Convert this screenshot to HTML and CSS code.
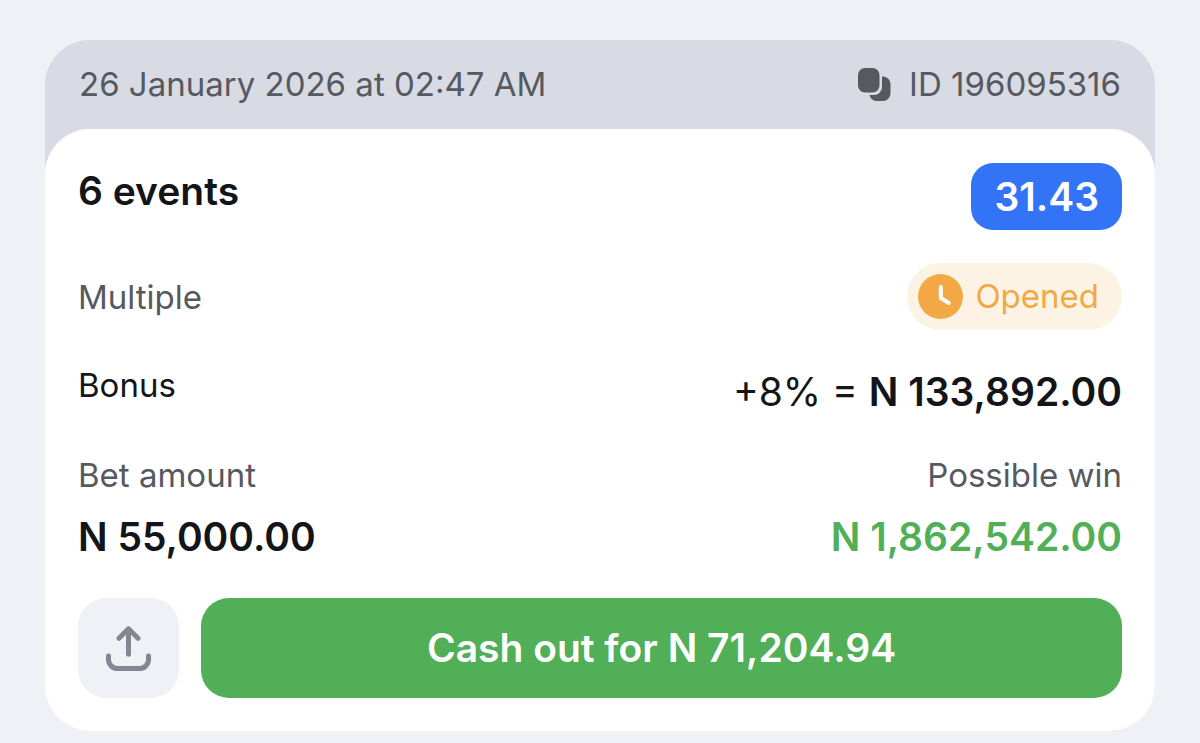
FILE: index.html
```html
<!DOCTYPE html>
<html lang="en">
<head>
    <meta charset="UTF-8">
    <meta name="viewport" content="width=device-width, initial-scale=1.0">
    <title>Bet details</title>
    <link rel="stylesheet" href="styles.css">
</head>
<body>
    <main class="bet">
        <header class="bet-header">
            <span class="date">26 January 2026 at 02:47 AM</span>
            <button class="copy-id" type="button">
                <svg class="copy-icon" viewBox="0 0 33 33" aria-hidden="true">
                    <rect width="21.5" height="24.5" rx="7"/>
                    <path d="M24 8.5h1a7.5 7.5 0 0 1 7.5 7.5v9.500a7.5 7.5 0 0 1-7.5 7.5h-6.5a7 7 0 0 1-7-6H16a8 8 0 0 0 8-8z"/>
                </svg>
                ID 196095316
            </button>
        </header>

        <section class="bet-card">
            <div class="row row-events">
                <h1 class="events">6 events</h1>
                <span class="odds">31.43</span>
            </div>

            <div class="row row-type">
                <span class="muted">Multiple</span>
                <span class="status">
                    <svg class="status-icon" viewBox="0 0 45 45" aria-hidden="true">
                        <circle cx="22.5" cy="22.5" r="22.5"/>
                        <path d="M22.8 13v11l8 5"/>
                    </svg>
                    Opened
                </span>
            </div>

            <div class="row row-bonus">
                <span class="label">Bonus</span>
                <span class="bonus">+8% = <strong>N 133,892.00</strong></span>
            </div>

            <div class="row row-labels">
                <span class="muted">Bet amount</span>
                <span class="muted">Possible win</span>
            </div>
            <div class="row row-amounts">
                <span class="amount">N 55,000.00</span>
                <span class="amount win">N 1,862,542.00</span>
            </div>

            <div class="actions">
                <button class="share" type="button" aria-label="Share">
                    <svg class="share-icon" viewBox="0 0 45 45" aria-hidden="true">
                        <path d="M22.5 28.3V2.8M13 12.3l9.5-9.5 9.5 9.5M2.5 30v3.5a9 9 0 0 0 9 9h22a9 9 0 0 0 9-9V30"/>
                    </svg>
                </button>
                <button class="cashout" type="button">Cash out for N 71,204.94</button>
            </div>
        </section>
    </main>
</body>
</html>
```

FILE: styles.css
```css
* {
    box-sizing: border-box;
}
body {
    margin: 0;
    padding: 40px 45px 12px;
    background: #f0f1f6;
    color: #141519;
    font-family: Inter, "Liberation Sans", sans-serif;
    font-size: 33px;
    line-height: 44px;
}
button {
    margin: 0;
    padding: 0;
    border: none;
    background: none;
    color: inherit;
    font: inherit;
    cursor: pointer;
}
.bet {
    background: #d8dbe3;
    border-radius: 45px;
}
.bet-header {
    display: flex;
    justify-content: space-between;
    align-items: center;
    padding: 22px 34px 23px;
    color: #565960;
}
.copy-id {
    display: flex;
    align-items: center;
    gap: 18px;
}
.copy-icon {
    width: 33px;
    height: 33px;
    fill: #565960;
}
.bet-card {
    padding: 34px 33px 33px;
    background: #fff;
    border-radius: 45px;
}
.row {
    display: flex;
    justify-content: space-between;
}
.row-events {
    margin-bottom: 33px;
}
.events {
    margin: 6px 0 0;
    font-size: 39px;
    font-weight: 600;
    line-height: 44px;
}
.odds {
    padding: 0 23px;
    border-radius: 22px;
    background: #3373f6;
    color: #fff;
    font-size: 39px;
    font-weight: 600;
    line-height: 67px;
}
.row-type {
    align-items: center;
    margin-bottom: 33px;
}
.muted {
    color: #565960;
}
.status {
    display: flex;
    align-items: center;
    gap: 12px;
    padding: 0 23px 0 11px;
    border-radius: 34px;
    background: #fdf3e5;
    color: #f2a945;
    line-height: 67px;
}
.status-icon {
    width: 45px;
    height: 45px;
    fill: #f2a945;
}
.status-icon path {
    fill: none;
    stroke: #fff;
    stroke-width: 4;
    stroke-linecap: round;
    stroke-linejoin: round;
}
.row-bonus {
    margin-bottom: 33px;
}
.bonus,
.amount {
    font-size: 39px;
    line-height: 57px;
}
.bonus strong,
.amount {
    font-weight: 600;
}
.row-labels {
    margin-bottom: 11px;
}
.win {
    color: #50af57;
}
.row-amounts {
    margin-bottom: 33px;
}
.actions {
    display: flex;
    gap: 22px;
}
.share {
    display: flex;
    flex: none;
    align-items: center;
    justify-content: center;
    width: 101px;
    border-radius: 28px;
    background: #f0f1f6;
}
.share-icon {
    width: 45px;
    height: 45px;
    fill: none;
    stroke: #838793;
    stroke-width: 5;
    stroke-linecap: round;
    stroke-linejoin: round;
}
.cashout {
    flex: 1;
    border-radius: 28px;
    background: #50af57;
    color: #fff;
    font-size: 39px;
    font-weight: 600;
    line-height: 100px;
}
```
